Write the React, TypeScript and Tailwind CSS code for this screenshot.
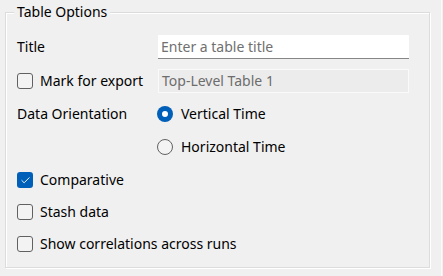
import { Check } from "lucide-react";

const CheckBox = ({ checked = false }: { checked?: boolean }) =>
  checked ? (
    <span className="w-4 h-4 rounded-[3px] bg-[#005fb8] flex items-center justify-center shrink-0">
      <Check className="w-[11px] h-[11px] text-white" strokeWidth={2} />
    </span>
  ) : (
    <span className="w-4 h-4 rounded-[3px] border border-[#616161] bg-[#f3f3f3] shrink-0" />
  );

const Radio = ({ checked = false }: { checked?: boolean }) =>
  checked ? (
    <span className="w-4 h-4 rounded-full bg-[#005fb8] flex items-center justify-center shrink-0">
      <span className="w-[6px] h-[6px] rounded-full bg-white" />
    </span>
  ) : (
    <span className="w-4 h-4 rounded-full border border-[#616161] bg-[#f3f3f3] shrink-0" />
  );

export default function App() {
  return (
    <div className="w-[443px] h-[276px] bg-[#f0f0f0] flex overflow-hidden font-['Noto_Sans',sans-serif] text-[14px] text-black leading-5">
      <div className="flex-1 pl-[5px] pt-[12px]">
        {/* Group box */}
        <div className="relative w-[425px] h-[256px] border border-[#dcdcdc] shadow-[inset_1px_1px_0_#fff,1px_1px_0_#fff] pl-[11px] pt-[22px]">
          <span className="absolute left-[8px] top-[-11px] px-[3px] bg-[#f0f0f0]">Table Options</span>

          <div className="flex items-center h-6">
            <span className="w-[141px]">Title</span>
            <input
              className="w-[251px] h-6 bg-white border-b border-[#868686] pl-[3px] outline-none placeholder:text-[#707070]"
              placeholder="Enter a table title"
            />
          </div>

          <div className="flex items-center h-6 mt-[10px]">
            <label className="w-[141px] flex items-center gap-[7px]">
              <CheckBox />
              <span>Mark for export</span>
            </label>
            <div className="w-[251px] h-6 bg-[#ececec] border border-[#fafafa] pl-[3px] flex items-center text-[#6d6d6d]">
              Top-Level Table 1
            </div>
          </div>

          <div className="flex items-center h-6 mt-[9px]">
            <span className="w-[140px]">Data Orientation</span>
            <label className="flex items-center gap-[8px]">
              <Radio checked />
              <span>Vertical Time</span>
            </label>
          </div>

          <div className="flex items-center h-6 mt-[9px] pl-[140px]">
            <label className="flex items-center gap-[8px]">
              <Radio />
              <span>Horizontal Time</span>
            </label>
          </div>

          <label className="flex items-center gap-[7px] h-6 mt-[9px]">
            <CheckBox checked />
            <span>Comparative</span>
          </label>

          <label className="flex items-center gap-[7px] h-6 mt-[8px]">
            <CheckBox />
            <span>Stash data</span>
          </label>

          <label className="flex items-center gap-[7px] h-6 mt-[8px]">
            <CheckBox />
            <span>Show correlations across runs</span>
          </label>
        </div>
      </div>
      <div className="w-[2px] border-l border-[#fbfbfb]" />
    </div>
  );
}
